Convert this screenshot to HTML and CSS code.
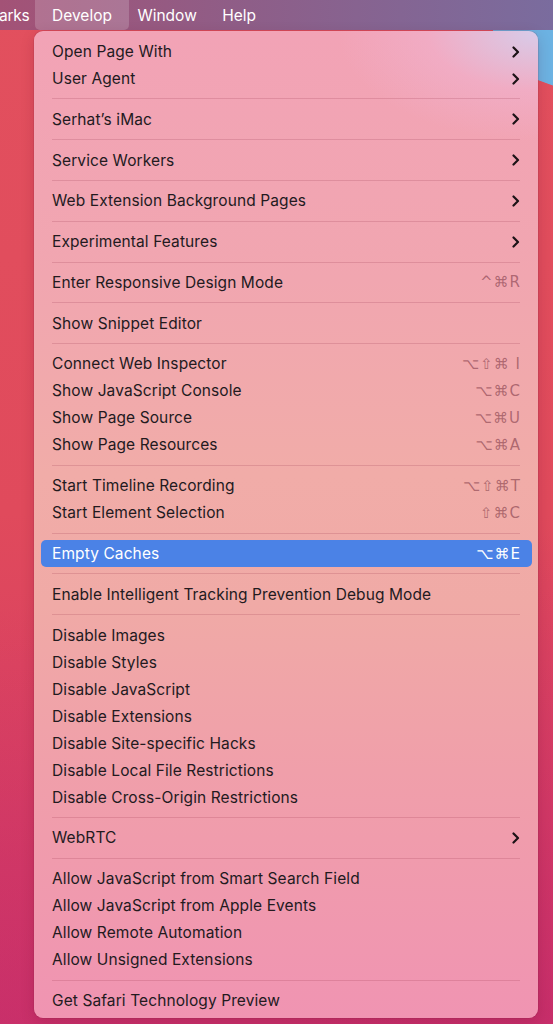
FILE: index.html
```html
<!DOCTYPE html>
<html lang="en">
<head>
<meta charset="UTF-8">
<meta name="viewport" content="width=device-width, initial-scale=1.0">
<title>Develop menu</title>
<link rel="stylesheet" href="styles.css">
</head>
<body>

<div class="desktop">
    <div class="menubar">
        <span class="barItem cut">arks</span>
        <span class="barItem active">Develop</span>
        <span class="barItem">Window</span>
        <span class="barItem">Help</span>
    </div>

    <div class="menu">
        <div class="row"><span>Open Page With</span><svg class="chev" viewBox="0 0 8 12"><path d="M1.5 1.5 L6 6 L1.5 10.5"/></svg></div>
        <div class="row"><span>User Agent</span><svg class="chev" viewBox="0 0 8 12"><path d="M1.5 1.5 L6 6 L1.5 10.5"/></svg></div>
        <div class="sep"></div>
        <div class="row"><span>Serhat’s iMac</span><svg class="chev" viewBox="0 0 8 12"><path d="M1.5 1.5 L6 6 L1.5 10.5"/></svg></div>
        <div class="sep"></div>
        <div class="row"><span>Service Workers</span><svg class="chev" viewBox="0 0 8 12"><path d="M1.5 1.5 L6 6 L1.5 10.5"/></svg></div>
        <div class="sep"></div>
        <div class="row"><span>Web Extension Background Pages</span><svg class="chev" viewBox="0 0 8 12"><path d="M1.5 1.5 L6 6 L1.5 10.5"/></svg></div>
        <div class="sep"></div>
        <div class="row"><span>Experimental Features</span><svg class="chev" viewBox="0 0 8 12"><path d="M1.5 1.5 L6 6 L1.5 10.5"/></svg></div>
        <div class="sep"></div>
        <div class="row"><span>Enter Responsive Design Mode</span><span class="key">^⌘R</span></div>
        <div class="sep"></div>
        <div class="row"><span>Show Snippet Editor</span></div>
        <div class="sep"></div>
        <div class="row"><span>Connect Web Inspector</span><span class="key">⌥⇧⌘ I</span></div>
        <div class="row"><span>Show JavaScript Console</span><span class="key">⌥⌘C</span></div>
        <div class="row"><span>Show Page Source</span><span class="key">⌥⌘U</span></div>
        <div class="row"><span>Show Page Resources</span><span class="key">⌥⌘A</span></div>
        <div class="sep"></div>
        <div class="row"><span>Start Timeline Recording</span><span class="key">⌥⇧⌘T</span></div>
        <div class="row"><span>Start Element Selection</span><span class="key">⇧⌘C</span></div>
        <div class="sep"></div>
        <div class="row selected"><span>Empty Caches</span><span class="key">⌥⌘E</span></div>
        <div class="sep"></div>
        <div class="row"><span>Enable Intelligent Tracking Prevention Debug Mode</span></div>
        <div class="sep"></div>
        <div class="row"><span>Disable Images</span></div>
        <div class="row"><span>Disable Styles</span></div>
        <div class="row"><span>Disable JavaScript</span></div>
        <div class="row"><span>Disable Extensions</span></div>
        <div class="row"><span>Disable Site-specific Hacks</span></div>
        <div class="row"><span>Disable Local File Restrictions</span></div>
        <div class="row"><span>Disable Cross-Origin Restrictions</span></div>
        <div class="sep"></div>
        <div class="row"><span>WebRTC</span><svg class="chev" viewBox="0 0 8 12"><path d="M1.5 1.5 L6 6 L1.5 10.5"/></svg></div>
        <div class="sep"></div>
        <div class="row"><span>Allow JavaScript from Smart Search Field</span></div>
        <div class="row"><span>Allow JavaScript from Apple Events</span></div>
        <div class="row"><span>Allow Remote Automation</span></div>
        <div class="row"><span>Allow Unsigned Extensions</span></div>
        <div class="sep"></div>
        <div class="row"><span>Get Safari Technology Preview</span></div>
    </div>
</div>

</body>
</html>
```

FILE: styles.css
```css
body {
    margin: 0;
    padding: 0;
    font-family: Inter, "Noto Sans", sans-serif;
    overflow: hidden;
}
.desktop {
    width: 553px;
    height: 1024px;
    display: flex;
    flex-direction: column;
    background:
        linear-gradient(172deg, transparent 0%, transparent 55%, rgba(190, 40, 110, 0.55) 100%),
        linear-gradient(180deg, #e2505e 0%, #e04a5c 50%, #d23666 100%);
    position: relative;
}
/* blue patch of wallpaper peeking out on the right */
.desktop::before {
    content: "";
    position: absolute;
    top: 30px;
    right: 0;
    width: 60px;
    height: 70px;
    background: linear-gradient(200deg, #6cb2e2 60%, transparent 61%);
}
.menubar {
    height: 30px;
    display: flex;
    align-items: stretch;
    background: linear-gradient(90deg, #a35276 0%, #8e5e88 45%, #7a6c9e 100%);
    color: #fff;
    font-size: 15.5px;
    position: relative;
    z-index: 1;
}
.barItem {
    display: flex;
    align-items: center;
    padding: 0 12.75px;
}
.barItem.cut {
    padding-left: 0;
    padding-right: 10px;
    margin-left: -1px;
    letter-spacing: -0.3px;
}
.barItem.active {
    padding: 0 17.5px;
    margin: 0 -4.75px;
    background-color: rgba(255, 255, 255, 0.18);
    border-radius: 0 0 5px 5px;
}
.menu {
    margin: 1px 0 0 34px;
    width: 504px;
    padding: 7px 0 4px;
    border-radius: 9px;
    box-shadow: 0 0 0 0.5px rgba(120, 30, 60, 0.25), 0 4px 14px rgba(90, 10, 40, 0.18);
    background:
        radial-gradient(ellipse 200px 110px at 100% 0%, rgba(214, 206, 236, 0.95) 0%, rgba(240, 180, 210, 0.5) 55%, transparent 100%),
        linear-gradient(180deg, #f2a3b6 0%, #f1a6b0 25%, #f1aca8 45%, #f0aaa6 58%, #f09faa 75%, #f094b2 100%);
    position: relative;
    z-index: 1;
    color: #231a1e;
    font-size: 15.5px;
    letter-spacing: 0.1px;
}
.row {
    height: 27px;
    margin: 0 6.5px;
    padding: 0 11.5px;
    display: flex;
    align-items: center;
    justify-content: space-between;
    border-radius: 5px;
}
.row.selected {
    background-color: #4b82e6;
    color: #fff;
}
.key {
    color: rgba(110, 40, 55, 0.52);
    letter-spacing: 1px;
    margin-right: -1px;
    font-family: "DejaVu Sans", Inter, sans-serif;
    font-size: 15px;
}
.row.selected .key {
    color: #fff;
}
.chev {
    width: 8px;
    height: 12px;
    fill: none;
    stroke: #1c1216;
    stroke-width: 2.2;
    stroke-linecap: round;
    stroke-linejoin: round;
}
.sep {
    height: 1px;
    margin: 6.4px 18px;
    background-color: rgba(150, 50, 75, 0.2);
}
```
